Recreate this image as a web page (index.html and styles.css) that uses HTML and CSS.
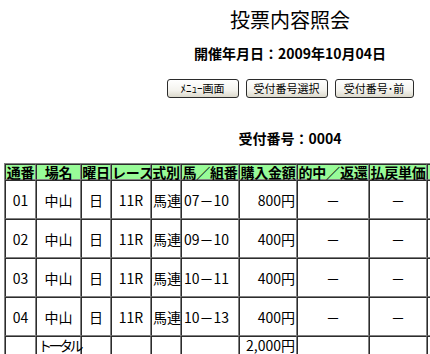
FILE: index.html
```html
<!DOCTYPE html>
<html lang="ja">
<head>
<meta charset="utf-8">
<title>投票内容照会</title>
<link rel="stylesheet" href="styles.css">
</head>
<body>
<div class="page">
  <h1 class="title">投票内容照会</h1>
  <p class="date">開催年月日：2009年10月04日</p>
  <div class="buttons">
    <button class="btn btn-menu">ﾒﾆｭｰ画面</button>
    <button class="btn btn-select">受付番号選択</button>
    <button class="btn btn-prev">受付番号･前</button>
  </div>
  <p class="receipt">受付番号：0004</p>
  <table class="bets">
    <colgroup>
      <col class="c1"><col class="c2"><col class="c3"><col class="c4"><col class="c5">
      <col class="c6"><col class="c7"><col class="c8"><col class="c9"><col class="c10">
    </colgroup>
    <thead>
      <tr>
        <th>通番</th><th>場名</th><th>曜日</th><th>レース</th><th>式別</th>
        <th>馬／組番</th><th>購入金額</th><th>的中／返還</th><th>払戻単価</th><th>払戻金額</th>
      </tr>
    </thead>
    <tbody>
      <tr>
        <td class="ctr">01</td><td class="ctr">中山</td><td class="ctr">日</td><td class="ctr">11R</td><td>馬連</td>
        <td class="pad">07－10</td><td class="rt">800円</td><td class="ctr">－</td><td class="ctr">－</td><td class="ctr">－</td>
      </tr>
      <tr>
        <td class="ctr">02</td><td class="ctr">中山</td><td class="ctr">日</td><td class="ctr">11R</td><td>馬連</td>
        <td class="pad">09－10</td><td class="rt">400円</td><td class="ctr">－</td><td class="ctr">－</td><td class="ctr">－</td>
      </tr>
      <tr>
        <td class="ctr">03</td><td class="ctr">中山</td><td class="ctr">日</td><td class="ctr">11R</td><td>馬連</td>
        <td class="pad">10－11</td><td class="rt">400円</td><td class="ctr">－</td><td class="ctr">－</td><td class="ctr">－</td>
      </tr>
      <tr>
        <td class="ctr">04</td><td class="ctr">中山</td><td class="ctr">日</td><td class="ctr">11R</td><td>馬連</td>
        <td class="pad">10－13</td><td class="rt">400円</td><td class="ctr">－</td><td class="ctr">－</td><td class="ctr">－</td>
      </tr>
      <tr class="total">
        <td></td><td class="tight">トータル</td><td></td><td></td><td></td>
        <td></td><td class="rt">2,000円</td><td></td><td></td><td></td>
      </tr>
    </tbody>
  </table>
</div>
</body>
</html>
```

FILE: styles.css
```css
html, body {
  margin: 0;
  padding: 0;
  overflow: hidden;
  background: #fff;
}

body {
  font-family: "Noto Sans CJK JP", sans-serif;
  color: #000;
}

.page {
  width: 572px;
  margin-left: 4px;
  padding-top: 8px;
}

.title {
  margin: 0;
  font-size: 20px;
  font-weight: normal;
  line-height: 24px;
  text-align: center;
}

.date {
  margin: 12px 0 0;
  font-size: 14px;
  font-weight: bold;
  line-height: 18px;
  text-align: center;
}

.buttons {
  margin-top: 17px;
  display: flex;
  justify-content: center;
  gap: 7px;
}

.btn {
  height: 19px;
  padding: 0;
  font-family: "Noto Sans CJK JP", sans-serif;
  font-size: 11px;
  line-height: 17px;
  color: #000;
  background: linear-gradient(#ffffff, #f4f3ee 60%, #dcd9cc);
  border: 1px solid #2b2b2b;
  border-radius: 3px;
}

.btn-menu { width: 72px; }
.btn-select { width: 82px; }
.btn-prev { width: 79px; }

.receipt {
  margin: 31px 0 0;
  font-size: 14px;
  font-weight: bold;
  line-height: 18px;
  text-align: center;
}

.bets {
  margin-top: 16px;
  border-collapse: separate;
  border-spacing: 0;
  table-layout: fixed;
  width: 496px;
  border: 1px outset #808080;
  font-size: 14px;
}

.c1 { width: 31px; }
.c2 { width: 45px; }
.c3 { width: 30px; }
.c4 { width: 40px; }
.c5 { width: 30px; }
.c6 { width: 58px; }
.c7 { width: 58px; }
.c8 { width: 72px; }
.c9 { width: 58px; }
.c10 { width: 74px; }

.bets th,
.bets td {
  border: 1px inset #808080;
  padding: 0;
  white-space: nowrap;
}

.bets th {
  height: 14px;
  line-height: 14px;
  font-weight: bold;
  letter-spacing: -0.2px;
  background: #98fb98;
  text-align: center;
}

.bets td {
  height: 37px;
  line-height: 16px;
  padding: 0 1px;
}

.bets .pad {
  padding-left: 2px;
}

.bets .total td {
  height: 17px;
  vertical-align: top;
}

.bets .tight {
  letter-spacing: -3.5px;
}

.ctr { text-align: center; }
.rt { text-align: right; }
```
